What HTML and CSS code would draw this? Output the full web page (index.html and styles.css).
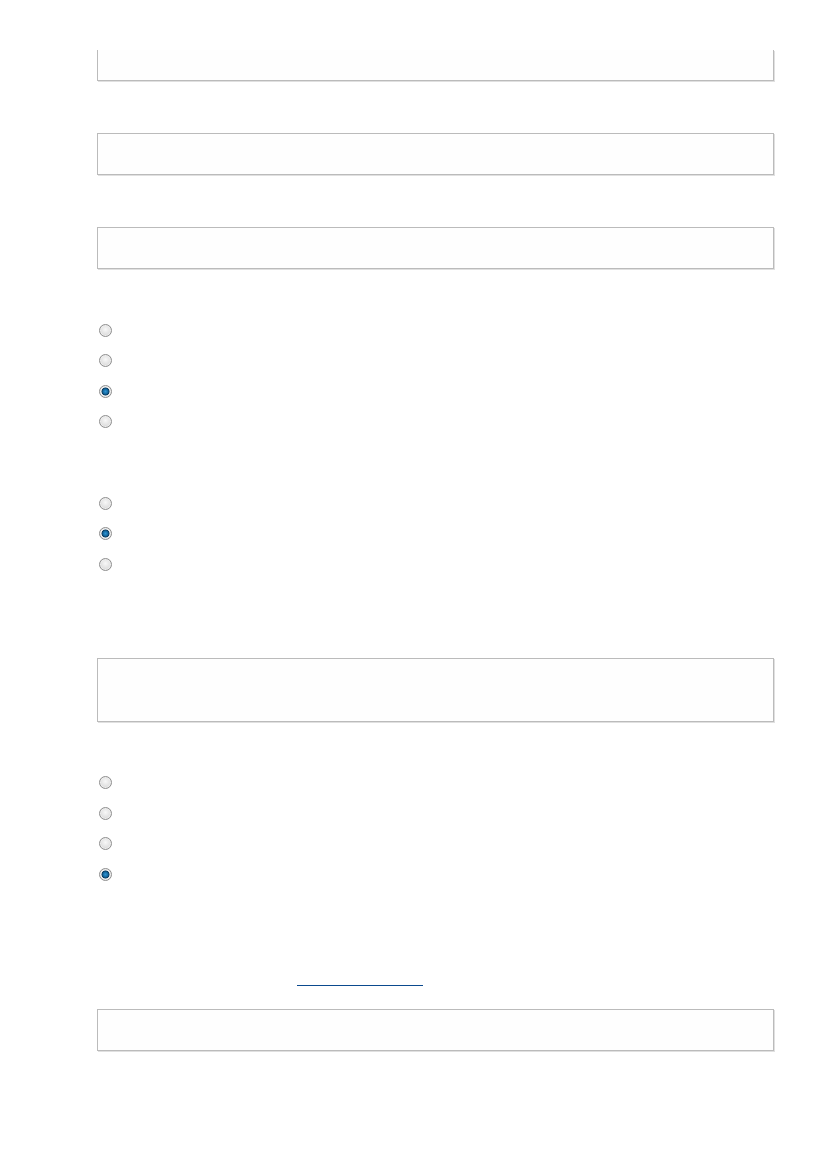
FILE: index.html
```html
<!DOCTYPE html>
<html lang="en">
<head>
    <meta charset="UTF-8">
    <meta name="viewport" content="width=device-width, initial-scale=1.0">
    <title>Form</title>
    <link rel="stylesheet" href="styles.css">
</head>
<body>
    <div class="form-container">
        <div class="text-input text-input-cut"></div>

        <input type="text" class="text-input gap-input">
        <input type="text" class="text-input gap-input">

        <div class="radio-group group-first">
            <div class="radio-row"><input type="radio" name="q1" class="radio"></div>
            <div class="radio-row"><input type="radio" name="q1" class="radio"></div>
            <div class="radio-row"><input type="radio" name="q1" class="radio" checked></div>
            <div class="radio-row"><input type="radio" name="q1" class="radio"></div>
        </div>

        <div class="radio-group group-second">
            <div class="radio-row"><input type="radio" name="q2" class="radio"></div>
            <div class="radio-row"><input type="radio" name="q2" class="radio" checked></div>
            <div class="radio-row"><input type="radio" name="q2" class="radio"></div>
        </div>

        <textarea class="text-input text-area"></textarea>

        <div class="radio-group group-third">
            <div class="radio-row"><input type="radio" name="q3" class="radio"></div>
            <div class="radio-row"><input type="radio" name="q3" class="radio"></div>
            <div class="radio-row"><input type="radio" name="q3" class="radio"></div>
            <div class="radio-row"><input type="radio" name="q3" class="radio" checked></div>
        </div>

        <div class="link-row">
            <a href="#" class="link-line"></a>
        </div>

        <input type="text" class="text-input last-input">
    </div>
</body>
</html>
```

FILE: styles.css
```css
* {
    margin: 0;
    padding: 0;
    box-sizing: border-box;
}

body {
    font-family: "Liberation Sans", Arial, sans-serif;
    background: white;
}

.form-container {
    padding: 50px 0 80px 97px;
    width: 774px;
    display: flex;
    flex-direction: column;
}

.text-input {
    display: block;
    width: 677px;
    height: 42px;
    border: 1px solid #bbbbbb;
    box-shadow: 1px 1px 0 #e0e0e0;
    background: #fefefe;
    outline: none;
    font-family: inherit;
    font-size: 14px;
    resize: none;
}

.text-input-cut {
    height: 31px;
    border-top: none;
}

.gap-input {
    margin-top: 52px;
}

.radio-group {
    display: flex;
    flex-direction: column;
}

.group-first {
    margin-top: 46px;
}

.group-second {
    margin-top: 51px;
}

.group-third {
    margin-top: 46px;
}

.radio-row {
    height: 30.5px;
    display: flex;
    align-items: center;
    padding-left: 2px;
}

.radio {
    appearance: none;
    -webkit-appearance: none;
    width: 13px;
    height: 13px;
    border-radius: 50%;
    border: 1px solid #8e8e8e;
    background: radial-gradient(circle at 50% 40%, #f8f8f8 0, #e2e2e2 55%, #c4c4c4 100%);
    box-shadow: inset 0 0 0 1px #eeeeee;
}

.radio:checked {
    background: radial-gradient(circle at 50% 50%, #2f95d4 0, #14689f 2.5px, #0a3a5e 3.6px, #f2f2f2 4.4px, #cfcfcf 100%);
}

.text-area {
    margin-top: 78px;
    height: 64px;
}

.link-row {
    margin-top: 79px;
    height: 21px;
    padding-left: 200px;
}

.link-line {
    display: inline-block;
    width: 126px;
    height: 17px;
    border-bottom: 1px solid #0b4a8e;
}

.last-input {
    margin-top: 19px;
}
```
